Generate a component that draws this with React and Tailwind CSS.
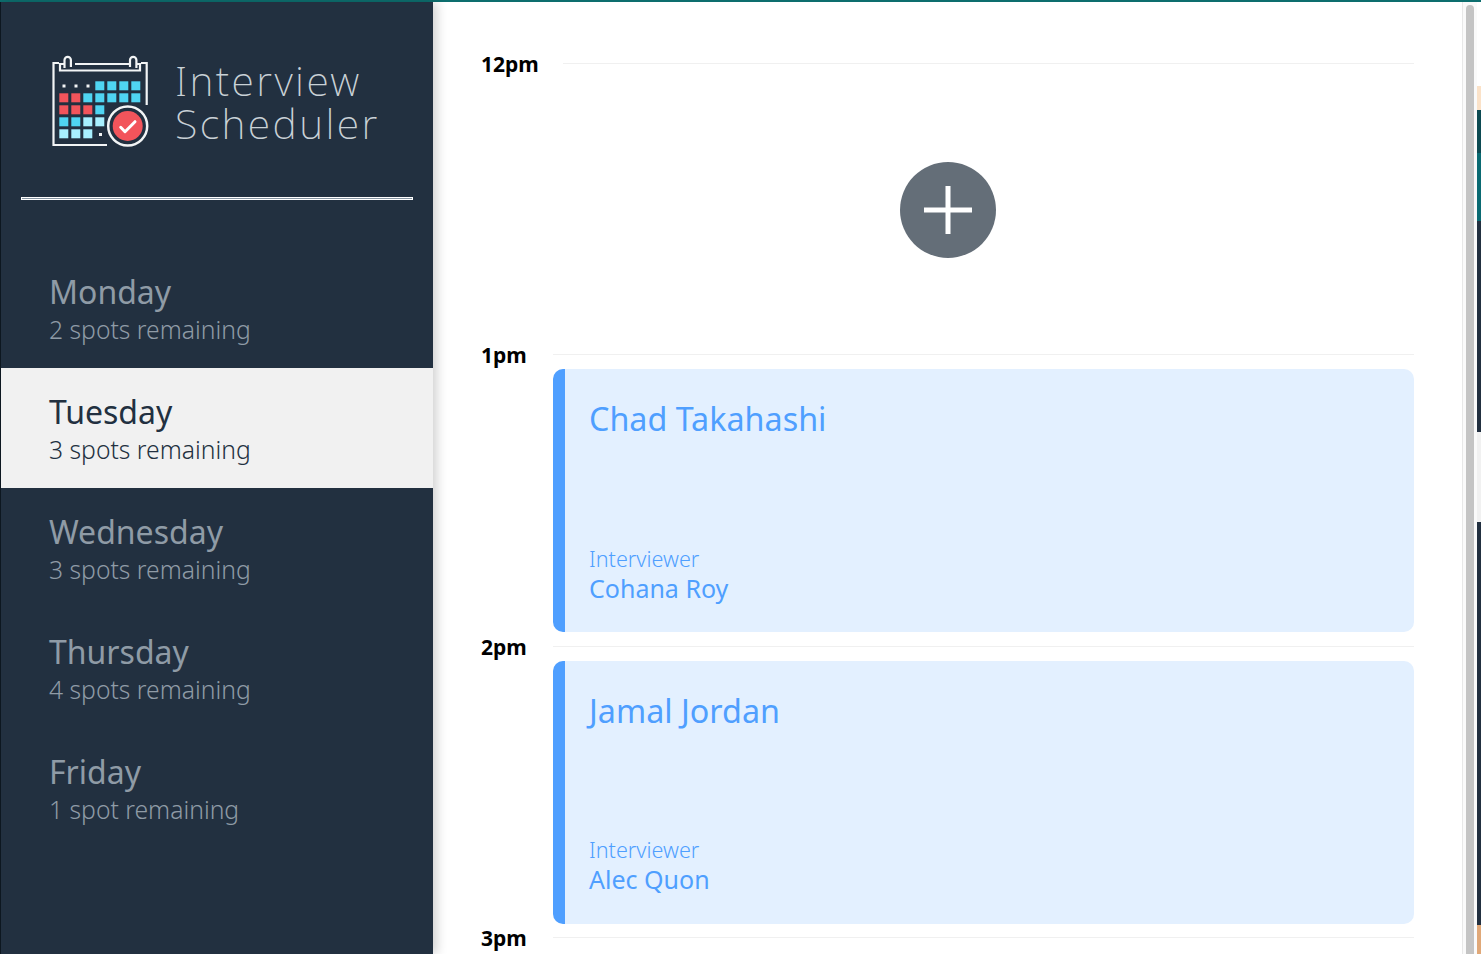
const days = [
  ["Monday", "2 spots remaining"],
  ["Tuesday", "3 spots remaining"],
  ["Wednesday", "3 spots remaining"],
  ["Thursday", "4 spots remaining"],
  ["Friday", "1 spot remaining"],
];

function Logo() {
  const R = "#f2545b", B = "#4fd5f2", L = "#a8f0ff";
  const rows = [
    [null, null, null, B, B, B, B],
    [R, R, B, B, B, B, B],
    [R, R, R, B, null, null, null],
    [B, B, L, L, null, null, null],
    [L, L, L, null, null, null, null],
  ];
  return (
    <svg width="100" height="94" viewBox="0 0 100 94" className="shrink-0" fill="none">
      <g stroke="#f2f4f5" strokeWidth="2.2">
        <path d="M9 9H3.5V91H57" />
        <path d="M91 9H96.7V51" />
        <path d="M14 10H10V16.5H90V10H87" />
        <path d="M25 10H79" />
        <path d="M14.5 14V6a3.2 3.2 0 0 1 6.4 0V13" />
        <path d="M80 13V6a3.2 3.2 0 0 1 6.4 0V14" />
      </g>
      <circle cx="77.7" cy="72" r="19.5" stroke="#f2f4f5" strokeWidth="2.5" />
      <circle cx="77.7" cy="72" r="15" fill="#f2545b" />
      <path d="M70.7 73.3l4.3 4.4 10-10" stroke="#fff" strokeWidth="3" strokeLinecap="round" strokeLinejoin="round" />
      {rows.map((row, r) =>
        row.map((c, i) =>
          c ? <rect key={`${r}-${i}`} x={9.3 + i * 12} y={27.3 + r * 12} width="9" height="9" fill={c} /> : null
        )
      )}
      <rect x="12.5" y="30.5" width="3" height="3" fill="#f2f4f5" />
      <rect x="24.5" y="30.5" width="3" height="3" fill="#f2f4f5" />
      <rect x="36.5" y="30.5" width="3" height="3" fill="#f2f4f5" />
      <rect x="49" y="79" width="3" height="3" fill="#f2f4f5" />
    </svg>
  );
}

function Slot({ time, wide, children }) {
  return (
    <div className="flex h-[291.5px] flex-col">
      <div className="flex h-[28px] items-center">
        <span className={`${wide ? "w-[82px]" : "w-[72px]"} shrink-0 pt-[1.6px] text-[21px] font-bold leading-none text-black`}>{time}</span>
        <div className="h-px flex-1 bg-[#f0f0f0]" />
      </div>
      {children}
    </div>
  );
}

function Card({ student, interviewer }) {
  return (
    <div className="ml-[72px] mt-[0.3px] flex h-[265px] rounded-[10px] border-l-[12px] border-[#4f9fff] bg-[#e3f0ff] pl-[24px] text-[#4f9fff]">
      <div className="flex flex-col">
        <div className="mt-[27px] text-[32.3px] leading-[44px]">{student}</div>
        <div className="mt-auto pb-[28.5px]">
          <div className="text-[21.6px] font-light leading-[27px]">Interviewer</div>
          <div className="text-[25px] leading-[32px]">{interviewer}</div>
        </div>
      </div>
    </div>
  );
}

export default function App() {
  return (
    <div className="flex h-[954px] flex-col overflow-hidden bg-white font-['Noto_Sans','Lato',sans-serif]">
      <div className="h-[2px] shrink-0 bg-[#0d6e6e]" />
      <div className="flex min-h-0 flex-1">
        <aside className="z-10 flex h-full w-[433px] shrink-0 flex-col border-l border-[#0d1720] bg-[#223040] shadow-[4px_0_10px_rgba(0,0,0,0.18)]">
          <div className="flex h-[195px] items-start pl-[49px] pt-[52px]">
            <Logo />
            <div className="ml-[25px] mt-[5px] text-[41px] font-extralight leading-[43px] tracking-[2.4px] text-[#c9d1d6]">
              <div>Interview</div>
              <div>Scheduler</div>
            </div>
          </div>
          <div className="mx-[20px] h-[3px] border border-white bg-[#8593a0]" />
          <nav className="mt-[48px] flex flex-col">
            {days.map(([d, s]) => {
              const on = d === "Tuesday";
              return (
                <div key={d} className={`flex h-[120px] flex-col justify-center pl-[48px] ${on ? "bg-[#f1f1f1] text-[#223040]" : "text-[#8f9ba6]"}`}>
                  <div className="text-[32px] leading-[44px]">{d}</div>
                  <div className="-mt-[0.5px] pb-[0.5px] text-[24.7px] font-light leading-[32px]">{s}</div>
                </div>
              );
            })}
          </nav>
        </aside>
        <main className="flex min-w-0 flex-1">
          <div className="flex-1 pl-[48px] pr-[48px] pt-[47.4px]">
            <Slot time="12pm" wide>
              <div className="flex justify-center pt-[85px]">
                <div className="flex size-[96px] items-center justify-center rounded-full bg-[#646e78]">
                  <svg width="48" height="48" viewBox="0 0 48 48"><path d="M24 0v48M0 24h48" stroke="#fff" strokeWidth="5" /></svg>
                </div>
              </div>
            </Slot>
            <Slot time="1pm"><Card student="Chad Takahashi" interviewer="Cohana Roy" /></Slot>
            <Slot time="2pm"><Card student="Jamal Jordan" interviewer="Alec Quon" /></Slot>
            <Slot time="3pm" />
          </div>
          <div className="flex h-full w-[15px] shrink-0 justify-center border-l border-[#e8e8e8] bg-[#fafafa] pt-[3px]">
            <div className="h-[1000px] w-[8px] rounded-t-full bg-[#c4c4c4]" />
          </div>
          <div className="flex h-full w-[4px] shrink-0 flex-col">
            <div className="h-[84px] bg-white" />
            <div className="h-[24px] bg-[#fbe2c8]" />
            <div className="h-[43px] bg-[#0c4a52]" />
            <div className="h-[68px] bg-[#0a6a72]" />
            <div className="h-[211px] bg-[#223040]" />
            <div className="h-[90px] bg-[#f1f1f1]" />
            <div className="h-[403px] bg-[#223040]" />
            <div className="flex-1 bg-[#e0a878]" />
          </div>
        </main>
      </div>
    </div>
  );
}
